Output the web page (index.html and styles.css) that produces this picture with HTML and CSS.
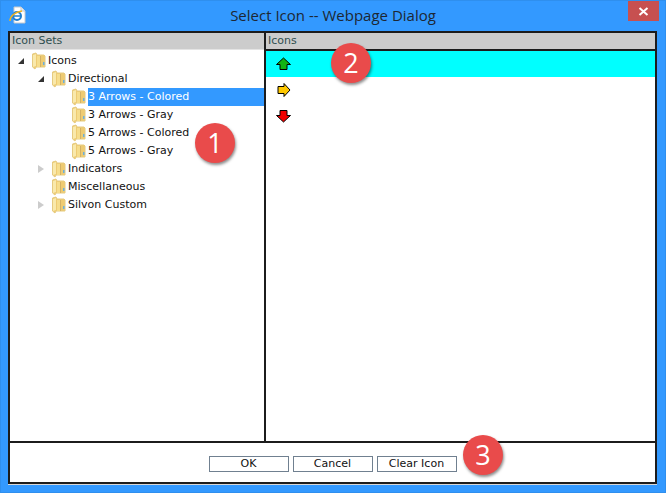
FILE: index.html
```html
<!DOCTYPE html>
<html lang="en">
  <head>
    <meta charset="UTF-8" />
    <title>Select Icon -- Webpage Dialog</title>
    <link rel="stylesheet" href="styles.css">
  </head>

  <body>
    <svg class="defs" width="0" height="0">
      <symbol id="folder" viewBox="0 0 15 18">
        <path d="M1.5 2 L5 1 L6 3 L13 3 L14 4 L14 15 L5 15 L4 17 L1.5 15 Z" fill="#eecb72" stroke="#e6cb80" stroke-width="1" />
        <path d="M2 3 L5 2 L5 14 L2 15 Z" fill="#f9e9ac" />
        <path d="M6 4 L9 4 L9 15 L6 15 Z" fill="#f6dd8c" />
        <path d="M9 4 L10 4 L10 15 L9 15 Z" fill="#d4b266" />
        <rect x="12" y="10" width="1.5" height="3" fill="#6db0dc" />
      </symbol>
    </svg>

    <div class="window">
      <header class="titlebar">
        <svg class="ie-icon" width="17" height="18" viewBox="0 0 17 18">
          <path d="M5 1 L12 1 L16 5 L16 17 L5 17 Z" fill="#fff" stroke="#c4c8cc" />
          <path d="M12 1 L12 5 L16 5" fill="#e6eaee" stroke="#c4c8cc" />
          <circle cx="8" cy="10" r="4" fill="none" stroke="#1f7fd0" stroke-width="2" />
          <path d="M4 10 L12 10" stroke="#1f7fd0" stroke-width="1.5" />
          <path d="M1 15 C1 10 6 6 13 5" fill="none" stroke="#f2b420" stroke-width="1.5" />
        </svg>
        <span class="title">Select Icon -- Webpage Dialog</span>
        <button class="close" aria-label="Close">
          <svg width="11" height="9" viewBox="0 0 11 9">
            <path d="M1.5 1 L9.5 8 M9.5 1 L1.5 8" stroke="#fff" stroke-width="2" />
          </svg>
        </button>
      </header>

      <div class="dialog">
        <div class="panes">
          <section class="pane sets">
            <h2 class="pane-head">Icon Sets</h2>
            <ul class="tree">
              <li class="row"><i class="toggle open"></i><svg class="folder"><use href="#folder" /></svg><span>Icons</span></li>
              <li class="row lvl1"><i class="toggle open"></i><svg class="folder"><use href="#folder" /></svg><span>Directional</span></li>
              <li class="row lvl2"><i class="toggle"></i><svg class="folder"><use href="#folder" /></svg><span class="selected">3 Arrows - Colored</span></li>
              <li class="row lvl2"><i class="toggle"></i><svg class="folder"><use href="#folder" /></svg><span>3 Arrows - Gray</span></li>
              <li class="row lvl2"><i class="toggle"></i><svg class="folder"><use href="#folder" /></svg><span>5 Arrows - Colored</span></li>
              <li class="row lvl2"><i class="toggle"></i><svg class="folder"><use href="#folder" /></svg><span>5 Arrows - Gray</span></li>
              <li class="row lvl1"><i class="toggle closed"></i><svg class="folder"><use href="#folder" /></svg><span>Indicators</span></li>
              <li class="row lvl1"><i class="toggle"></i><svg class="folder"><use href="#folder" /></svg><span>Miscellaneous</span></li>
              <li class="row lvl1"><i class="toggle closed"></i><svg class="folder"><use href="#folder" /></svg><span>Silvon Custom</span></li>
            </ul>
          </section>

          <section class="pane icons">
            <h2 class="pane-head">Icons</h2>
            <ul class="icon-list">
              <li class="icon-row active">
                <svg width="15" height="14" viewBox="0 0 15 14"><path d="M7.5 1 L14.5 7.5 L11 7.5 L11 12.5 L4 12.5 L4 7.5 L0.5 7.5 Z" fill="#12b312" stroke="#000" /></svg>
              </li>
              <li class="icon-row">
                <svg width="15" height="14" viewBox="0 0 15 14"><path d="M14 7 L8 13.5 L8 10.5 L2 10.5 L2 3.5 L8 3.5 L8 0.5 Z" fill="#ffc800" stroke="#000" /></svg>
              </li>
              <li class="icon-row">
                <svg width="15" height="14" viewBox="0 0 15 14"><path d="M7.5 13 L0.5 6.5 L4 6.5 L4 1.5 L11 1.5 L11 6.5 L14.5 6.5 Z" fill="#f00000" stroke="#000" /></svg>
              </li>
            </ul>
          </section>
        </div>

        <footer class="actions">
          <button class="btn">OK</button>
          <button class="btn">Cancel</button>
          <button class="btn">Clear Icon</button>
        </footer>
      </div>

      <!-- Callouts -->
      <div class="badge badge-1">1</div>
      <div class="badge badge-2">2</div>
      <div class="badge badge-3">3</div>
    </div>
  </body>
</html>
```

FILE: styles.css
```css
body {
  margin: 0;
  background-color: #3399ff;
  font-family: "DejaVu Sans", Verdana, sans-serif;
  font-size: 11px;
  overflow: hidden;
}

.defs {
  position: absolute;
}

.window {
  position: relative;
  width: 664px;
  height: 491px;
  border: 1px solid #2f8fee;
  display: flex;
  flex-direction: column;
}

.titlebar {
  height: 30px;
  flex: none;
  display: flex;
  align-items: flex-start;
  justify-content: center;
  position: relative;
}

.ie-icon {
  position: absolute;
  left: 8px;
  top: 5px;
}

.title {
  font-family: "Open Sans", sans-serif;
  font-size: 15px;
  line-height: 28px;
  color: #1d2733;
}

.close {
  position: absolute;
  right: 6px;
  top: 0;
  width: 31px;
  height: 20px;
  padding: 0;
  border: none;
  background-color: #c75050;
  display: flex;
  align-items: center;
  justify-content: center;
}

.dialog {
  width: 645px;
  height: 449px;
  margin-left: 7px;
  background-color: white;
  border: 2px solid #1c1c1c;
  box-shadow: 0 1px 0 #d8d8d8;
  display: flex;
  flex-direction: column;
}

.panes {
  flex: 1;
  display: flex;
  min-height: 0;
  border-bottom: 2px solid #1c1c1c;
}

.pane {
  display: flex;
  flex-direction: column;
}

.sets {
  width: 254px;
  flex: none;
  border-right: 2px solid #1c1c1c;
}

.icons {
  flex: 1;
}

.pane-head {
  margin: 0;
  height: 16px;
  padding-left: 2px;
  background-color: #cccccc;
  color: #2f4f4f;
  font-size: 11px;
  font-weight: normal;
  line-height: 16px;
}

.sets .pane-head {
  border-bottom: 1px solid #e4e4e4;
}

.icons .pane-head {
  border-bottom: 2px solid #1c1c1c;
}

.tree,
.icon-list {
  list-style: none;
  margin: 0;
  padding: 0;
}

.tree {
  padding-top: 2px;
}

.row {
  height: 18px;
  display: flex;
  align-items: center;
  padding-left: 5px;
  color: #111;
  white-space: nowrap;
}

.row span {
  line-height: 18px;
  margin-left: 2px;
}

.lvl1 {
  padding-left: 25px;
}

.lvl2 {
  padding-left: 45px;
}

.row .selected {
  flex: 1;
  background-color: #3399ff;
  color: white;
}

.toggle {
  width: 16px;
  height: 18px;
  flex: none;
  position: relative;
}

.toggle.open::after {
  content: "";
  position: absolute;
  left: 3px;
  top: 6px;
  border-style: solid;
  border-width: 0 0 6px 6px;
  border-color: transparent transparent #333 transparent;
}

.toggle.closed::after {
  content: "";
  position: absolute;
  left: 3px;
  top: 5px;
  width: 6px;
  height: 8px;
  background-color: #ccc;
  clip-path: polygon(0 0, 100% 50%, 0 100%);
}

.folder {
  width: 15px;
  height: 18px;
  flex: none;
}

.icon-row {
  height: 26px;
  display: flex;
  align-items: center;
  padding-left: 10px;
}

.icon-row.active {
  background-color: aqua;
}

.actions {
  height: 39px;
  flex: none;
  display: flex;
  justify-content: center;
  align-items: flex-start;
  gap: 4px;
  padding-top: 13px;
  box-sizing: border-box;
}

.btn {
  width: 80px;
  height: 16px;
  padding: 0;
  background-color: white;
  border: 1px solid #708090;
  color: #111;
  font-family: "DejaVu Sans", Verdana, sans-serif;
  font-size: 11px;
  line-height: 14px;
}

.badge {
  position: absolute;
  width: 40px;
  height: 40px;
  border-radius: 50%;
  background-color: #e94b4b;
  box-shadow: 1px 2px 3px rgba(0, 0, 0, 0.45);
  color: white;
  font-family: "Open Sans", sans-serif;
  font-size: 27px;
  line-height: 39px;
  text-align: center;
}

.badge-1 {
  left: 194px;
  top: 122px;
}

.badge-2 {
  left: 330px;
  top: 42px;
}

.badge-3 {
  left: 462px;
  top: 434px;
}
```
